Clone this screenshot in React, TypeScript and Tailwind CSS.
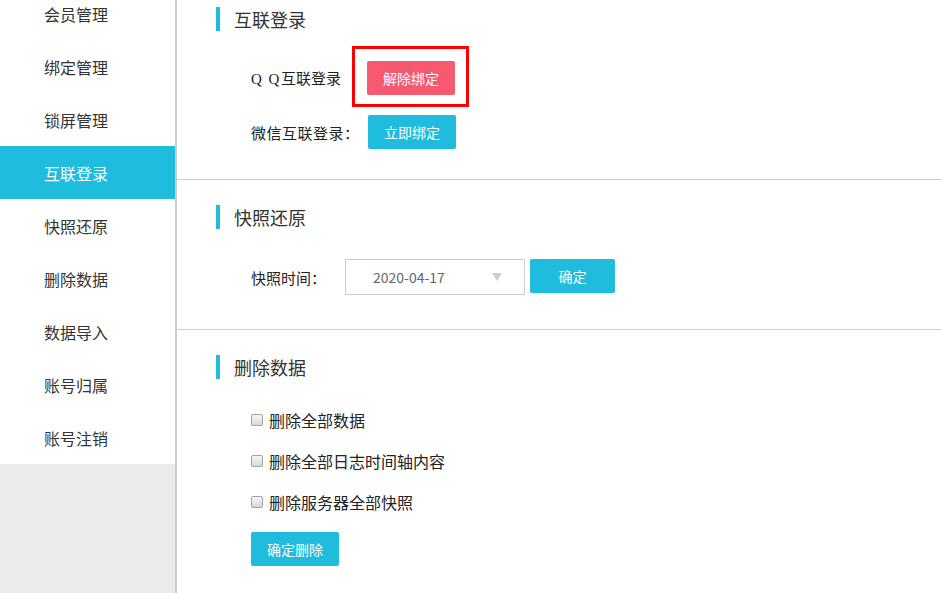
import React from 'react';

const menu = ['会员管理', '绑定管理', '锁屏管理', '互联登录', '快照还原', '删除数据', '数据导入', '账号归属', '账号注销'];

const SectionTitle: React.FC<{ title: string }> = ({ title }) => (
  <div className="flex items-center h-[24px] ml-[39px]">
    <span className="w-[4px] h-[24px] bg-[#20bcdd]" />
    <span className="ml-[14px] text-[18px] leading-none text-[#333]">{title}</span>
  </div>
);

const Checkbox: React.FC<{ label: string }> = ({ label }) => (
  <label className="flex items-center h-[20px]">
    <span className="w-[12px] h-[12px] rounded-[2px] border border-[#a3a3a3] bg-gradient-to-b from-[#f6f6f6] to-[#d9d9d9]" />
    <span className="ml-[6px] text-[16px] leading-none text-[#222]">{label}</span>
  </label>
);

const App: React.FC = () => {
  const active = '互联登录';

  return (
    <div
      className="flex h-[593px] w-[941px] overflow-hidden bg-white"
      style={{ fontFamily: '"Noto Sans CJK SC", "Noto Sans", sans-serif' }}
    >
      {/* sidebar */}
      <div className="w-[177px] shrink-0 bg-[#ebebeb] border-r-2 border-[#cccccc]">
        <ul className="mt-[-13px] bg-white">
          {menu.map((item) => (
            <li
              key={item}
              className={
                item === active
                  ? 'h-[53px] flex items-center pl-[44px] text-[16px] leading-none bg-[#20bcdd] text-white'
                  : 'h-[53px] flex items-center pl-[44px] text-[16px] leading-none text-[#333]'
              }
            >
              {item}
            </li>
          ))}
        </ul>
      </div>

      {/* content */}
      <div className="flex-1">
        <section className="pt-[7px] pb-[30px] border-b border-[#d0d0d0]">
          <SectionTitle title="互联登录" />
          <div className="mt-[30px] pl-[74px] flex flex-col gap-[20px]">
            <div className="flex items-center">
              <span className="w-[116px] text-[15px] leading-none text-[#222]">
                <span className="tracking-[1.5px]" style={{ fontFamily: '"Liberation Serif", serif' }}>Q Q</span>互联登录
              </span>
              <div className="relative">
                <button className="w-[88px] h-[34px] rounded-[2px] bg-[#f55a71] text-white text-[14px] leading-none">解除绑定</button>
                <span className="absolute top-[-15px] left-[-15px] right-[-14px] bottom-[-12px] border-[3px] border-[#ff0000]" />
              </div>
            </div>
            <div className="flex items-center">
              <span className="w-[117px] text-[15px] leading-none tracking-[0.5px] text-[#222]">微信互联登录：</span>
              <button className="w-[88px] h-[34px] rounded-[2px] bg-[#20bcdd] text-white text-[14px] leading-none">立即绑定</button>
            </div>
          </div>
        </section>

        <section className="pt-[25px] pb-[34px] border-b border-[#d0d0d0]">
          <SectionTitle title="快照还原" />
          <div className="mt-[30px] pl-[74px] flex items-start">
            <span className="w-[94px] h-[36px] flex items-center text-[15px] leading-none text-[#222]">快照时间：</span>
            <div className="w-[180px] h-[36px] border border-[#cccccc] flex items-center pl-[27px] pr-[22px]">
              <span className="flex-1 text-[14px] text-[#666]">2020-04-17</span>
              <svg width="10" height="8" viewBox="0 0 10 8">
                <path d="M0 0 H10 L5 8 Z" fill="#cccccc" />
              </svg>
            </div>
            <button className="ml-[5px] w-[85px] h-[34px] rounded-[2px] bg-[#20bcdd] text-white text-[14px] leading-none">确定</button>
          </div>
        </section>

        <section className="pt-[25px]">
          <SectionTitle title="删除数据" />
          <div className="mt-[31px] pl-[74px] flex flex-col gap-[21px]">
            <Checkbox label="删除全部数据" />
            <Checkbox label="删除全部日志时间轴内容" />
            <Checkbox label="删除服务器全部快照" />
          </div>
          <div className="mt-[20px] pl-[74px]">
            <button className="w-[88px] h-[34px] rounded-[2px] bg-[#20bcdd] text-white text-[14px] leading-none">确定删除</button>
          </div>
        </section>
      </div>
    </div>
  );
};

export default App;
